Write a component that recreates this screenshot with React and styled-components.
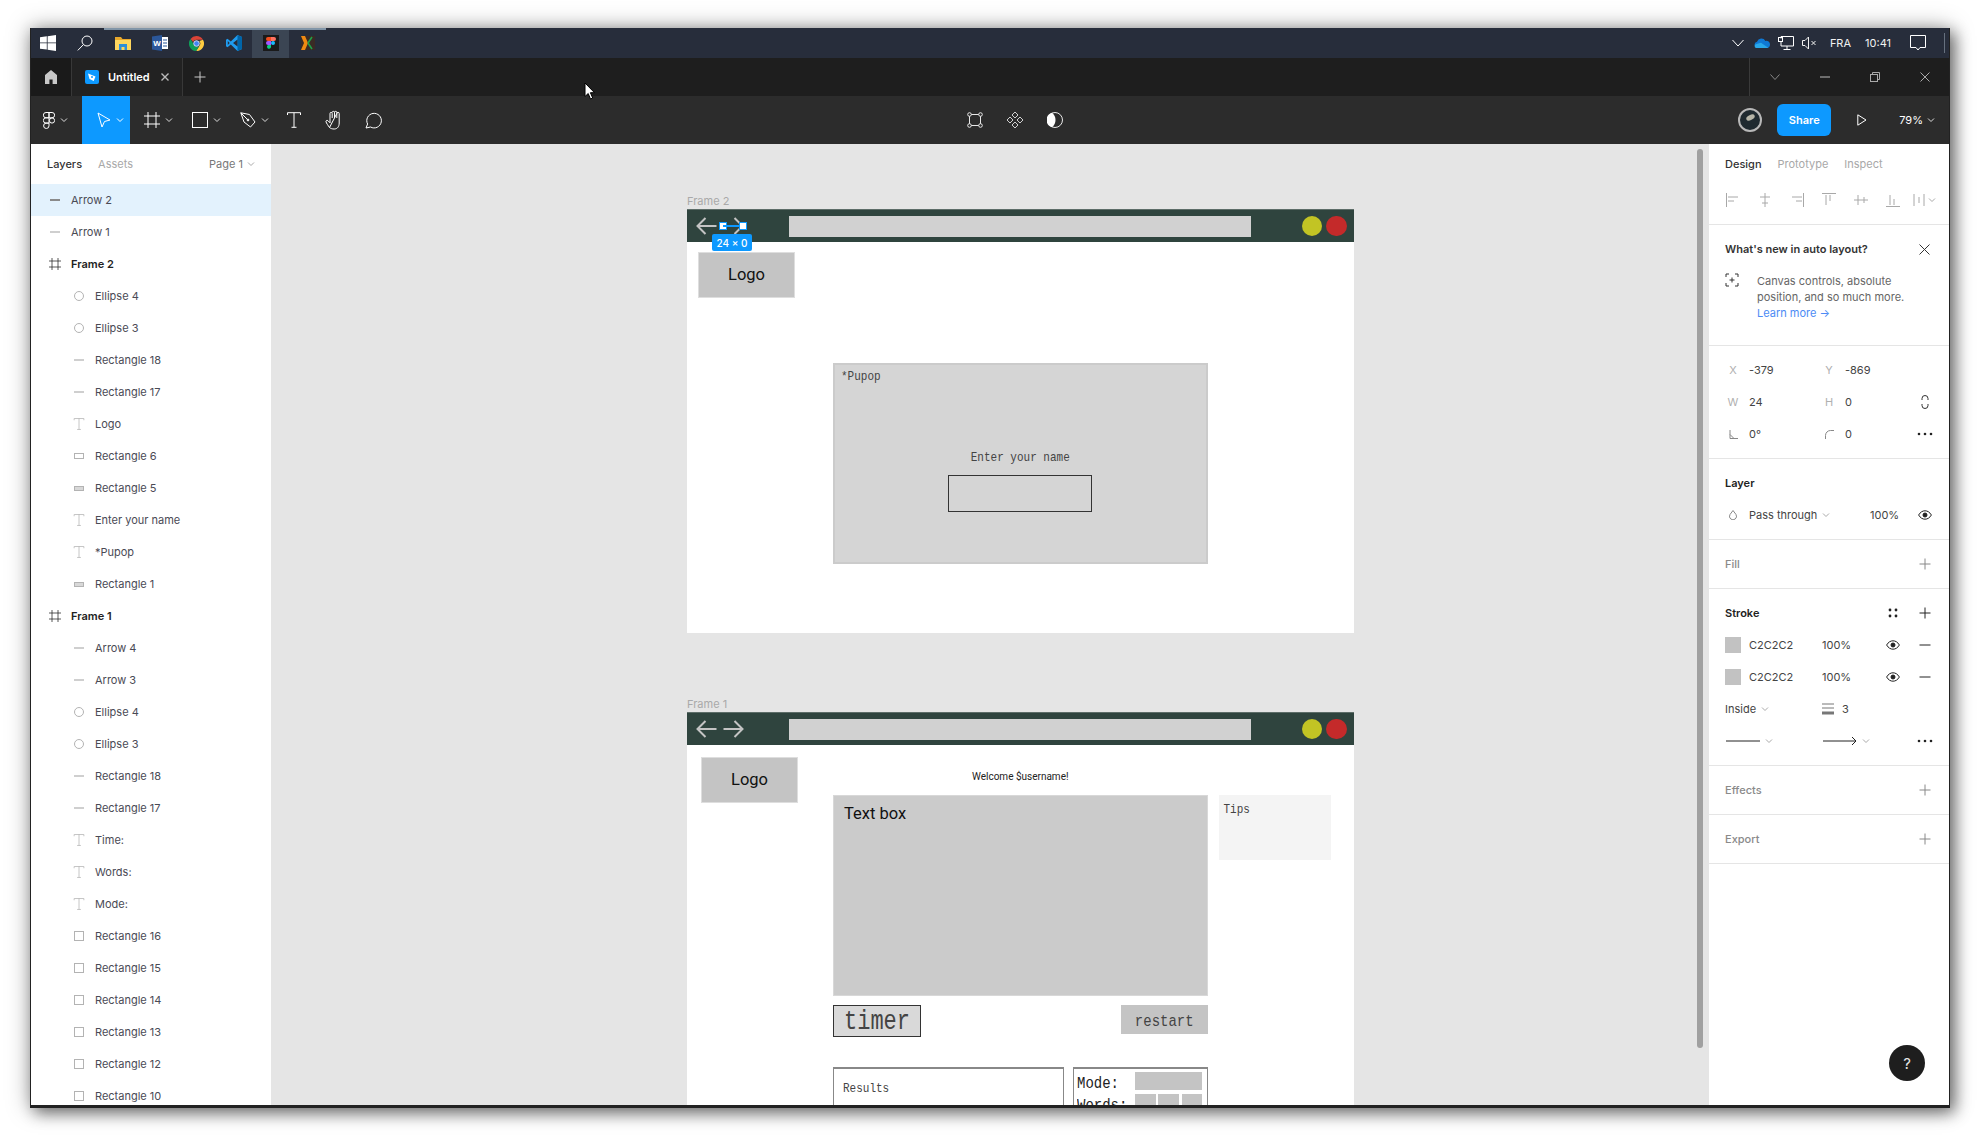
import React from 'react';
import styled, { createGlobalStyle } from 'styled-components';

const GlobalStyle = createGlobalStyle`
    html, body {
        margin: 0;
        padding: 0;
        background: #fff;
        overflow: hidden;
    }
    * {
        box-sizing: border-box;
    }
`;

const UI_FONT = `Inter, "Liberation Sans", sans-serif`;
const MONO_FONT = `"Liberation Mono", monospace`;
const SKETCH_FONT = `Roboto, "Liberation Sans", sans-serif`;

const Page = styled.div`
    width: 1980px;
    height: 1140px;
    padding: 28px 30px 32px;
    font-family: ${UI_FONT};
`;

const Window = styled.div`
    position: relative;
    width: 1920px;
    height: 1080px;
    display: flex;
    flex-direction: column;
    overflow: hidden;
    background: #2c2c2c;
    border-left: 1px solid #222;
    border-right: 1px solid #222;
    border-bottom: 3px solid #222;
    box-shadow: 5px 5px 14px rgba(0, 0, 0, 0.45), 0 0 22px rgba(0, 0, 0, 0.35);
`;

/* windows taskbar */
const Taskbar = styled.div`
    height: 30px;
    flex: none;
    display: flex;
    align-items: stretch;
    margin-left: -1px;
    background: #272d3b;
    color: #fff;
`;

const TaskCell = styled.div`
    width: ${p => p.$w || 37}px;
    display: flex;
    align-items: center;
    justify-content: center;
    background: ${p => (p.$active ? '#3b4553' : 'transparent')};
    box-shadow: ${p => (p.$open ? 'inset 0 2px 0 #8296a8' : 'none')};
`;

const Tray = styled.div`
    margin-left: auto;
    display: flex;
    align-items: center;
    padding-right: 4px;
`;

const TrayItem = styled.div`
    margin-left: ${p => p.$ml || 0}px;
    display: flex;
    align-items: center;
    font-size: 11px;
    color: #f2f2f2;
`;

const TrayLine = styled.div`
    width: 1px;
    height: 20px;
    margin-left: 18px;
    background: #66707e;
`;

/* tabs */
const TabBar = styled.div`
    height: 38px;
    flex: none;
    display: flex;
    align-items: stretch;
    background: #1e1e1e;
    color: #bbb;
`;

const HomeCell = styled.div`
    width: 41px;
    display: flex;
    align-items: center;
    justify-content: center;
    background: #1a1a1a;
    border-right: 1px solid #383838;
`;

const Tab = styled.div`
    width: 111px;
    display: flex;
    align-items: center;
    padding-left: 13px;
    background: #222;
    border-right: 1px solid #383838;
`;

const TabName = styled.span`
    margin-left: 9px;
    width: 53px;
    color: #fff;
    font-size: 11px;
    font-weight: 600;
`;

const PlusCell = styled.div`
    width: 34px;
    display: flex;
    align-items: center;
    justify-content: center;
`;

const WinControls = styled.div`
    margin-left: auto;
    margin-right: -1px;
    display: flex;
    border-left: 1px solid #3a3a3a;
`;

const WinControl = styled.div`
    width: 50px;
    display: flex;
    align-items: center;
    justify-content: center;
`;

const Pointer = styled.svg`
    position: absolute;
    left: 553px;
    top: 54px;
`;

/* figma toolbar */
const Toolbar = styled.div`
    height: 48px;
    flex: none;
    display: flex;
    align-items: stretch;
    background: #2c2c2c;
    color: #fff;
`;

const ToolButton = styled.div`
    width: ${p => p.$w || 48}px;
    display: flex;
    align-items: center;
    justify-content: ${p => (p.$center ? 'center' : 'flex-start')};
    gap: 5px;
    padding-left: ${p => (p.$center ? 0 : p.$pad || 14)}px;
    background: ${p => (p.$active ? '#0d99ff' : 'transparent')};
`;

const ToolCenter = styled.div`
    display: flex;
    margin-left: 561px;
`;

const ToolRight = styled.div`
    margin-left: auto;
    display: flex;
    align-items: center;
    padding-right: 14px;
`;

const Avatar = styled.div`
    width: 24px;
    height: 24px;
    display: flex;
    align-items: center;
    justify-content: center;
    border-radius: 50%;
    border: 2px solid #b8b8b8;
    background: #1f2a30;
`;

const AvatarSpot = styled.div`
    width: 9px;
    height: 5px;
    margin-bottom: 5px;
    border-radius: 50%;
    background: #b5b5a8;
    transform: rotate(-25deg);
`;

const ShareButton = styled.div`
    width: 54px;
    height: 32px;
    margin-left: 15px;
    display: flex;
    align-items: center;
    justify-content: center;
    border-radius: 6px;
    background: #0d99ff;
    font-size: 11px;
    font-weight: 600;
`;

const PlayBox = styled.div`
    margin-left: 26px;
    display: flex;
`;

const Zoom = styled.span`
    margin-left: 32px;
    margin-right: 4px;
    font-size: 11px;
`;

/* main area */
const Main = styled.div`
    flex: 1;
    min-height: 0;
    display: flex;
`;

const LeftPanel = styled.aside`
    width: 240px;
    flex: none;
    background: #fff;
    overflow: hidden;
`;

const PanelTabs = styled.div`
    height: 41px;
    display: flex;
    align-items: center;
    gap: 16px;
    padding: 0 16px;
    border-bottom: 1px solid #e5e5e5;
    font-size: 11px;
`;

const PanelTab = styled.span`
    color: ${p => (p.$active ? '#333' : '#a8a8a8')};
    font-weight: ${p => (p.$active ? 500 : 400)};
`;

const PageSelect = styled.span`
    margin-left: auto;
    display: flex;
    align-items: center;
    gap: 4px;
    color: #777;
`;

const LayerRow = styled.div`
    height: 32px;
    display: flex;
    align-items: center;
    gap: 8px;
    padding-left: ${p => (p.$nested ? 40 : 16)}px;
    margin-top: ${p => (p.$first ? -1 : 0)}px;
    background: ${p => (p.$selected ? '#e3f2fd' : 'transparent')};
    color: ${p => (p.$bold ? '#222' : '#4a4a55')};
    font-size: 11px;
    font-weight: ${p => (p.$bold ? 600 : 400)};
`;

const LayerIconBox = styled.span`
    width: 16px;
    height: 16px;
    flex: none;
    display: flex;
    align-items: center;
    justify-content: center;
`;

const LayerDash = styled.span`
    width: 10px;
    height: 2px;
    background: ${p => (p.$selected ? '#8a8a8a' : '#cfcfcf')};
`;

const LayerBox = styled.span`
    width: ${p => p.$w}px;
    height: ${p => p.$h}px;
    border: 1px solid #b3b3b3;
    background: ${p => (p.$filled ? '#d8d8d8' : 'transparent')};
    border-radius: ${p => (p.$round ? '50%' : '0')};
`;

/* canvas */
const Canvas = styled.main`
    position: relative;
    flex: 1;
    min-width: 0;
    overflow: hidden;
    background: #e5e5e5;
`;

const Node = styled.div`
    position: absolute;
    left: 416px;
    top: ${p => p.$top}px;
    width: 667px;
`;

const NodeLabel = styled.div`
    height: 16px;
    line-height: 16px;
    font-size: 11px;
    color: #a9a9a9;
`;

const SketchFrame = styled.div`
    position: relative;
    height: ${p => p.$h}px;
    display: flex;
    flex-direction: column;
    background: #fff;
`;

const BrowserBar = styled.div`
    height: 33px;
    flex: none;
    display: flex;
    align-items: center;
    gap: 6px;
    padding-left: 9px;
    background: #2f443e;
    border-top: 1px solid #5d6d68;
`;

const UrlField = styled.div`
    width: 461.5px;
    height: 21px;
    margin-left: 39px;
    background: #d1d1d1;
`;

const Dot = styled.div`
    width: 20.5px;
    height: 20.5px;
    margin-left: ${p => p.$ml}px;
    border-radius: 50%;
    background: ${p => p.$color};
`;

const Handle = styled.span`
    position: absolute;
    top: 13px;
    left: ${p => p.$left}px;
    width: 8px;
    height: 8px;
    background: #fff;
    border: 1px solid #0d99ff;
`;

const SelectionLine = styled.span`
    position: absolute;
    top: 16px;
    left: 36px;
    width: 20px;
    height: 2px;
    background: #0d99ff;
`;

const SizeBadge = styled.span`
    position: absolute;
    top: 25px;
    left: 25px;
    width: 40px;
    height: 17px;
    display: flex;
    align-items: center;
    justify-content: center;
    border-radius: 2px;
    background: #0d99ff;
    color: #fff;
    font-size: 10px;
    font-weight: 500;
`;

const LogoBox = styled.div`
    width: 97px;
    height: 46px;
    margin: ${p => p.$margin};
    display: flex;
    align-items: center;
    justify-content: center;
    padding-bottom: 1px;
    background: #c4c4c4;
    border: 1px solid #dedede;
    color: #111;
    font-family: ${SKETCH_FONT};
    font-size: 16.5px;
`;

const Popup = styled.div`
    width: 374.5px;
    height: 201px;
    margin: 65px 0 0 146px;
    display: flex;
    flex-direction: column;
    align-items: center;
    padding: 3px 6px;
    background: #d5d5d5;
    border: 2px solid #cbcbcb;
`;

/* the sketch uses a tall narrow mono face, stretch the closest installed one */
const MonoText = styled.span`
    display: inline-block;
    font-family: ${MONO_FONT};
    font-size: ${p => p.$size || 11}px;
    line-height: ${p => p.$lh || 16}px;
    color: ${p => p.$color || '#444'};
    transform: scaleY(1.22);
`;

const PopupTitle = styled(MonoText)`
    align-self: flex-start;
`;

const PopupPrompt = styled(MonoText)`
    margin-top: 65px;
`;

const NameInput = styled.div`
    width: 144px;
    height: 37px;
    margin-top: 10px;
    border: 1px solid #333;
`;

const FrameBody = styled.div`
    display: grid;
    grid-template-columns: 132px 385.5px 112px;
    padding-left: 14px;
`;

const MainColumn = styled.div`
    width: 374.5px;
    display: flex;
    flex-direction: column;
`;

const Welcome = styled.div`
    height: 50px;
    padding-top: 24px;
    line-height: 16px;
    text-align: center;
    font-family: ${SKETCH_FONT};
    font-size: 10px;
    color: #222;
`;

const TextBox = styled.div`
    height: 201px;
    padding: 7px 10px;
    background: #cbcbcb;
    border: 1px solid #d8d8d8;
    color: #111;
    font-family: ${SKETCH_FONT};
    font-size: 16.5px;
    line-height: 22px;
`;

const ActionRow = styled.div`
    display: flex;
    justify-content: space-between;
    align-items: flex-start;
    margin-top: 9px;
`;

const Timer = styled.div`
    width: 88px;
    height: 32px;
    display: flex;
    align-items: center;
    justify-content: center;
    padding-top: 3px;
    background: #d9d9d9;
    border: 1px solid #333;
`;

const RestartButton = styled.div`
    width: 86.5px;
    height: 29px;
    display: flex;
    align-items: center;
    justify-content: center;
    padding-top: 2px;
    background: #c4c4c4;
`;

const ResultRow = styled.div`
    display: flex;
    gap: 9px;
    margin-top: 30px;
`;

const ResultsBox = styled.div`
    width: 231px;
    height: 100px;
    padding: 6px 9px;
    border: 1px solid #888;
    border-top-width: 2px;
`;

const ModeBox = styled.div`
    width: 134.5px;
    height: 100px;
    display: grid;
    grid-template-columns: 55px 21px 21px 20px;
    grid-auto-rows: 18px;
    column-gap: 2.5px;
    row-gap: 4px;
    align-items: center;
    padding: 3px 0 0 3px;
    border: 1px solid #888;
    border-top-width: 2px;
`;

const ModeLabel = styled(MonoText)`
    margin-top: 4px;
    color: #222;
`;

const ModeField = styled.div`
    grid-column: ${p => p.$span || 'auto'};
    height: 18px;
    background: #c4c4c4;
`;

const TipsBox = styled.div`
    height: 65px;
    margin-top: 50px;
    padding: 1px 5px;
    background: #f4f4f4;
`;

const Scrollbar = styled.div`
    position: absolute;
    top: 5px;
    right: 6px;
    width: 6px;
    height: 899px;
    border-radius: 3px;
    background: #a0a0a0;
`;

/* right panel */
const RightPanel = styled.aside`
    position: relative;
    width: 240px;
    flex: none;
    background: #fff;
    font-size: 11px;
    color: #444;
`;

const DesignTabs = styled.div`
    height: 40px;
    display: flex;
    align-items: center;
    gap: 16px;
    padding-left: 16px;
`;

const Section = styled.section`
    padding: 8px 0;
    border-bottom: 1px solid #e5e5e5;
`;

const AlignSection = styled.div`
    height: 41px;
    padding: 0 0 9px 16px;
    display: flex;
    align-items: center;
    gap: 16px;
    border-bottom: 1px solid #e5e5e5;
`;

const DistributeIcon = styled.span`
    display: flex;
    align-items: center;
    gap: 1px;
    margin-left: -4px;
`;

const NewsSection = styled.section`
    height: 121px;
    border-bottom: 1px solid #e5e5e5;
`;

const NewsTitle = styled.div`
    height: 48px;
    display: flex;
    align-items: center;
    justify-content: space-between;
    padding: 0 19px 0 16px;
    font-weight: 600;
    color: #333;
`;

const NewsBody = styled.div`
    display: flex;
    padding-left: 16px;
`;

const NewsIcon = styled.div`
    width: 32px;
    flex: none;
`;

const NewsText = styled.div`
    line-height: 16px;
    color: #666;
`;

const LearnMore = styled.span`
    display: block;
    color: #4c8bf5;
`;

const Row = styled.div`
    height: 32px;
    display: grid;
    grid-template-columns: ${p => p.$columns || '16px 1fr 32px'};
    align-items: center;
    padding: 0 8px 0 16px;
    color: ${p => p.$color || '#444'};
`;

const PropRow = styled(Row)`
    grid-template-columns: 16px 8px 72px 16px 8px 1fr 32px;
`;

const PropLabel = styled.span`
    color: #b0b0b0;
    text-align: center;
`;

const IconCell = styled.span`
    display: flex;
    align-items: center;
    justify-content: center;
    color: ${p => p.$color || '#333'};
`;

const SectionTitle = styled.span`
    color: ${p => (p.$muted ? '#8a8a8a' : '#222')};
    font-weight: ${p => (p.$muted ? 500 : 600)};
`;

const Swatch = styled.span`
    width: 16px;
    height: 16px;
    background: #c2c2c2;
`;

const Muted = styled.span`
    display: flex;
    align-items: center;
    gap: 5px;
`;

const HelpButton = styled.div`
    position: absolute;
    right: 24px;
    bottom: 24px;
    width: 36px;
    height: 36px;
    display: flex;
    align-items: center;
    justify-content: center;
    border-radius: 50%;
    background: #1e1e1e;
    color: #e6e6e6;
    font-size: 15px;
`;

/* icons */
const Icon = ({ size = 16, w, h, view, children, color = 'currentColor', sw = 1 }) => (
    <svg
        width={w || size}
        height={h || size}
        viewBox={view || `0 0 ${w || size} ${h || size}`}
        fill="none"
        stroke={color}
        strokeWidth={sw}
        style={{ display: 'block', flex: 'none' }}
    >
        {children}
    </svg>
);

const Chevron = ({ color = 'currentColor' }) => (
    <Icon w={8} h={6} color={color}>
        <path d="M1 1.5 L4 4.5 L7 1.5" />
    </Icon>
);

const Plus = ({ color }) => (
    <Icon size={12} color={color}>
        <path d="M6 .5v11M.5 6h11" />
    </Icon>
);

const Minus = () => (
    <Icon size={12} color="#222">
        <path d="M.5 6h11" />
    </Icon>
);

const Dots = () => (
    <svg width="16" height="4" viewBox="0 0 16 4" style={{ display: 'block' }}>
        <circle cx="2" cy="2" r="1.3" fill="#222" />
        <circle cx="8" cy="2" r="1.3" fill="#222" />
        <circle cx="14" cy="2" r="1.3" fill="#222" />
    </svg>
);

const Eye = () => (
    <Icon w={14} h={10} color="#222">
        <path d="M.6 5C2.4 2 4.6.8 7 .8S11.6 2 13.4 5C11.6 8 9.4 9.2 7 9.2S2.4 8 .6 5z" />
        <circle cx="7" cy="5" r="2" fill="#222" />
    </Icon>
);

const Cross = ({ size = 10, color = 'currentColor', sw = 1 }) => (
    <Icon size={size} color={color} sw={sw}>
        <path d={`M.5 .5L${size - 0.5} ${size - 0.5}M${size - 0.5} .5L.5 ${size - 0.5}`} />
    </Icon>
);

const ArrowSvg = styled.svg`
    display: block;
    flex: none;
    transform: ${p => (p.$flip ? 'scaleX(-1)' : 'none')};
`;

const SketchArrow = ({ flip }) => (
    <ArrowSvg $flip={flip} width="21" height="20" viewBox="0 0 21 20" fill="none" stroke="#c4c4c4" strokeWidth="2">
        <path d="M20.5 10H2M9.5 2L1.5 10l8 8" />
    </ArrowSvg>
);

const Windows = () => (
    <svg width="16" height="16" viewBox="0 0 16 16" style={{ display: 'block' }}>
        <path fill="#fff" d="M0 2.3 6.8 1.3v6.2H0zM7.6 1.2 16 0v7.5H7.6zM0 8.3h6.8v6.3L0 13.7zM7.6 8.3H16V16l-8.4-1.2z" />
    </svg>
);

const Search = () => (
    <Icon size={16} color="#fff">
        <circle cx="10" cy="6" r="5" />
        <path d="M6.4 9.6 .8 15.4" />
    </Icon>
);

const Explorer = () => (
    <svg width="16" height="14" viewBox="0 0 16 14" style={{ display: 'block' }}>
        <path fill="#e8a82c" d="M0 1h6l1.5 2H16v2H0z" />
        <path fill="#ffd75e" d="M0 4h16v10H0z" />
        <path fill="#2f8fd8" d="M4 8h8v6H9.5v-3h-3v3H4z" />
    </svg>
);

const Word = () => (
    <svg width="16" height="16" viewBox="0 0 16 16" style={{ display: 'block' }}>
        <rect x="6" y="2" width="10" height="12" fill="#fff" />
        <path d="M11 5h4M11 8h4M11 11h4" stroke="#2b579a" strokeWidth="1" />
        <path fill="#2b579a" d="M0 1.5 10 0v16L0 14.5z" />
        <text x="5" y="11" fill="#fff" fontSize="8" fontWeight="700" textAnchor="middle" fontFamily="Liberation Sans">W</text>
    </svg>
);

const Chrome = () => (
    <svg width="15" height="15" viewBox="0 0 16 16" style={{ display: 'block' }}>
        <path fill="#db4437" d="M8 0a8 8 0 0 1 6.9 4H8a4 4 0 0 0-3.7 2.5L1.6 3.1A8 8 0 0 1 8 0z" />
        <path fill="#ffcd40" d="M14.9 4A8 8 0 0 1 7.6 16l3.2-5.2A4 4 0 0 0 11 5.4L14.9 4z" />
        <path fill="#0f9d58" d="M1.6 3.1l3 5.2a4 4 0 0 0 6.2 2.5L7.6 16A8 8 0 0 1 1.6 3.1z" />
        <circle cx="8" cy="8" r="3" fill="#4285f4" stroke="#fff" strokeWidth=".8" />
    </svg>
);

const VsCode = () => (
    <svg width="16" height="16" viewBox="0 0 16 16" style={{ display: 'block' }}>
        <path fill="#1f9cf0" d="M11.5 0 16 2v12l-4.5 2L4.8 9.6 1.5 12.2 0 11.3V4.7l1.5-.9 3.3 2.6z" />
        <path fill="#0065a9" d="M11.5 0 16 2v12l-4.5 2z" />
        <path fill="#272d3b" d="M11.5 4.6v6.8L7 8zM1.8 6.1 3.7 8l-1.9 1.9z" />
    </svg>
);

const FigmaApp = () => (
    <svg width="16" height="16" viewBox="0 0 16 16" style={{ display: 'block' }}>
        <rect width="16" height="16" fill="#1a1a1a" />
        <path fill="#f24e1e" d="M5 2h3v4H5a2 2 0 0 1 0-4z" />
        <path fill="#ff7262" d="M8 2h3a2 2 0 0 1 0 4H8z" />
        <path fill="#a259ff" d="M5 6h3v4H5a2 2 0 0 1 0-4z" />
        <circle cx="10" cy="8" r="2" fill="#1abcfe" />
        <path fill="#0acf83" d="M5 10h3v2a2 2 0 1 1-3-2z" />
    </svg>
);

const XApp = () => (
    <svg width="14" height="14" viewBox="0 0 14 14" style={{ display: 'block' }}>
        <rect width="14" height="14" fill="#3a2b25" />
        <path fill="#f08a12" d="M0 0h4l3 7-3 7H0l3-7z" />
        <path stroke="#1fa04a" strokeWidth="1.6" fill="none" d="M7 7l4-6M7 7l4 6" />
    </svg>
);

const OneDrive = () => (
    <svg width="16" height="10" viewBox="0 0 16 10" style={{ display: 'block' }}>
        <path fill="#0f78d4" d="M3.4 10A3.2 3.2 0 0 1 3 3.7 4.6 4.6 0 0 1 11.4 3 3.6 3.6 0 0 1 16 6.6 3.4 3.4 0 0 1 12.6 10z" />
        <path fill="#29a8ea" d="M2 10a2 2 0 0 1 .6-3.9L7 4.8l7.6 5.2z" />
    </svg>
);

const Network = () => (
    <Icon size={16} color="#fff">
        <path d="M3 3.5V1.5h12.5v9.5H3V6.5M9 11v3M5.5 14.5h7" />
        <rect x=".5" y="2.5" width="4" height="4" />
    </Icon>
);

const Speaker = () => (
    <Icon w={15} h={14} color="#f2f2f2">
        <path d="M.5 4.5h2.5L6.5 1v12L3 9.5H.5zM9.5 5l4 4M13.5 5l-4 4" />
    </Icon>
);

const Notice = () => (
    <Icon size={16} color="#fff">
        <path d="M.5 .5h15v12H10l-2 2.5-2-2.5H.5z" />
    </Icon>
);

const Home = () => (
    <svg width="14" height="14" viewBox="0 0 14 14" style={{ display: 'block' }}>
        <path fill="#c8c8c8" d="M7 0 13 5v9H8.6V9.5H5.4V14H1V5z" />
    </svg>
);

const FileBadge = () => (
    <svg width="14" height="14" viewBox="0 0 14 14" style={{ display: 'block' }}>
        <rect width="14" height="14" rx="2" fill="#0d99ff" />
        <path d="M3 3.5 10.5 6.5 8.7 11 4.5 9z" fill="#fff" />
        <circle cx="7" cy="7" r="1" fill="#0d99ff" />
    </svg>
);

const FigmaMenu = () => (
    <Icon w={12} h={17} color="#fff">
        <path d="M3 .5h3v5.3H3A2.6 2.6 0 0 1 3 .5zM6 .5h3a2.6 2.6 0 0 1 0 5.3H6zM3 5.8h3v5.3H3a2.6 2.6 0 0 1 0-5.3z" />
        <circle cx="9" cy="8.5" r="2.6" />
        <path d="M3 11.1h3v2.7a2.7 2.7 0 1 1-3-2.7z" />
    </Icon>
);

const Move = () => (
    <Icon w={14} h={16} color="#fff">
        <path d="M1 1 13 8 7.5 9.5 5 15z" />
    </Icon>
);

const FrameTool = ({ size = 16, color = '#fff' }) => (
    <Icon color={color} w={size} h={size} view="0 0 16 16">
        <path d="M4 0v16M12 0v16M0 4h16M0 12h16" />
    </Icon>
);

const RectTool = () => (
    <Icon size={16} color="#fff">
        <rect x=".5" y=".5" width="15" height="15" />
    </Icon>
);

const PenTool = () => (
    <Icon size={16} color="#fff">
        <path d="M.8 .8 9.5 2.5 15 10l-4.5 5-6.5-5z" />
        <path d="M.8 .8 7.5 7.5" />
        <circle cx="8" cy="8" r=".9" fill="#fff" />
    </Icon>
);

const TextTool = ({ w = 14, h = 16, color = '#fff' }) => (
    <Icon w={w} h={h} view="0 0 14 16" color={color}>
        <path d="M.5 3V.7h13V3M7 .7v14.6M4.5 15.3h5" />
    </Icon>
);

const HandTool = () => (
    <Icon w={18} h={20} color="#fff">
        <path d="M4.5 17.5C3 15.5 1.5 13.2 1 11.8c-.4-1.2 1-2 2-1l2 2V3.5a1 1 0 0 1 2.2 0V8M7.2 2.5a1.1 1.1 0 0 1 2.3 0V8M9.5 2.5a1.1 1.1 0 0 1 2.3 0V8M11.8 3.5a1.1 1.1 0 0 1 2.4 0v9.5c0 3.5-1.8 6-5 6-2 0-3.6-.5-4.7-1.5z" />
    </Icon>
);

const Comment = () => (
    <Icon w={18} h={17} color="#fff">
        <path d="M1 16 2.6 12A7.3 7.3 0 1 1 5.5 15z" />
    </Icon>
);

const CornerHandles = () => (
    <Icon size={16} color="#e8e8e8">
        <path d="M3 2.5h10M3 13.5h10M2.5 3v10M13.5 3v10" />
        <circle cx="2.5" cy="2.5" r="1.8" fill="#2c2c2c" />
        <circle cx="13.5" cy="2.5" r="1.8" fill="#2c2c2c" />
        <circle cx="2.5" cy="13.5" r="1.8" fill="#2c2c2c" />
        <circle cx="13.5" cy="13.5" r="1.8" fill="#2c2c2c" />
    </Icon>
);

const ComponentDiamonds = () => (
    <Icon size={18} color="#cfcfcf">
        <path d="M9 1l3 3-3 3-3-3zM4 6l3 3-3 3-3-3zM14 6l3 3-3 3-3-3zM9 11l3 3-3 3-3-3z" />
    </Icon>
);

const Contrast = () => (
    <svg width="16" height="16" viewBox="0 0 16 16" style={{ display: 'block' }}>
        <circle cx="8" cy="8" r="7.5" fill="none" stroke="#e8e8e8" />
        <path d="M5 .8a7.5 7.5 0 0 0 0 14.4A9 9 0 0 0 8.5 8 9 9 0 0 0 5 .8z" fill="#fff" />
    </svg>
);

const Play = () => (
    <Icon w={10} h={12} color="#fff" view="0 0 10 12">
        <path d="M.8 .8 9 6 .8 11.2z" />
    </Icon>
);

const Restore = () => (
    <Icon size={10} color="#aaa">
        <rect x=".5" y="2.5" width="7" height="7" />
        <path d="M2.5 2.5v-2h7v7h-2" />
    </Icon>
);

const AlignIcon = ({ bars }) => (
    <Icon size={16} color="#a8a8a8">
        <path d={bars} />
    </Icon>
);

const ALIGN_ICONS = [
    'M1.5 1v14M3 5h10M3 9h6',
    'M8 1v14M3 5h10M5 11h6',
    'M14.5 1v14M3 5h10M7 9h6',
    'M1 1.5h14M5 3v10M9 3v6',
    'M1 8h14M5 3v10M11 5v6',
    'M1 14.5h14M5 3v10M9 7v6',
];

const LayerIcon = ({ kind, selected }) => (
    <LayerIconBox>
        {kind === 'line' && <LayerDash $selected={selected} />}
        {kind === 'ellipse' && <LayerBox $w={10} $h={10} $round />}
        {kind === 'text' && <TextTool w={12} h={12} color="#b3b3b3" />}
        {kind === 'frame' && <FrameTool size={12} color="#222" />}
        {kind === 'flat' && <LayerBox $w={10} $h={6} />}
        {kind === 'flatFill' && <LayerBox $w={10} $h={5} $filled />}
        {kind === 'square' && <LayerBox $w={10} $h={10} />}
    </LayerIconBox>
);

const LAYERS = [
    { name: 'Arrow 2', kind: 'line', selected: true },
    { name: 'Arrow 1', kind: 'line' },
    { name: 'Frame 2', kind: 'frame', bold: true },
    { name: 'Ellipse 4', kind: 'ellipse', nested: true },
    { name: 'Ellipse 3', kind: 'ellipse', nested: true },
    { name: 'Rectangle 18', kind: 'line', nested: true },
    { name: 'Rectangle 17', kind: 'line', nested: true },
    { name: 'Logo', kind: 'text', nested: true },
    { name: 'Rectangle 6', kind: 'flat', nested: true },
    { name: 'Rectangle 5', kind: 'flatFill', nested: true },
    { name: 'Enter your name', kind: 'text', nested: true },
    { name: '*Pupop', kind: 'text', nested: true },
    { name: 'Rectangle 1', kind: 'flatFill', nested: true },
    { name: 'Frame 1', kind: 'frame', bold: true },
    { name: 'Arrow 4', kind: 'line', nested: true },
    { name: 'Arrow 3', kind: 'line', nested: true },
    { name: 'Ellipse 4', kind: 'ellipse', nested: true },
    { name: 'Ellipse 3', kind: 'ellipse', nested: true },
    { name: 'Rectangle 18', kind: 'line', nested: true },
    { name: 'Rectangle 17', kind: 'line', nested: true },
    { name: 'Time:', kind: 'text', nested: true },
    { name: 'Words:', kind: 'text', nested: true },
    { name: 'Mode:', kind: 'text', nested: true },
    { name: 'Rectangle 16', kind: 'square', nested: true },
    { name: 'Rectangle 15', kind: 'square', nested: true },
    { name: 'Rectangle 14', kind: 'square', nested: true },
    { name: 'Rectangle 13', kind: 'square', nested: true },
    { name: 'Rectangle 12', kind: 'square', nested: true },
    { name: 'Rectangle 10', kind: 'square', nested: true },
];

const TopBar = ({ children }) => (
    <BrowserBar>
        <SketchArrow />
        <SketchArrow flip />
        <UrlField />
        <Dot $ml={45} $color="#c2c424" />
        <Dot $ml={-2} $color="#c42a2a" />
        {children}
    </BrowserBar>
);

const StrokeRow = () => (
    <Row $columns="16px 8px 73px 1fr 16px 8px 32px">
        <Swatch />
        <span />
        <span>C2C2C2</span>
        <span>100%</span>
        <IconCell>
            <Eye />
        </IconCell>
        <span />
        <IconCell>
            <Minus />
        </IconCell>
    </Row>
);

const App = () => (
    <Page>
        <GlobalStyle />
        <Window>
            <Taskbar>
                <TaskCell $w={36}>
                    <Windows />
                </TaskCell>
                <TaskCell $w={38}>
                    <Search />
                </TaskCell>
                <TaskCell $open>
                    <Explorer />
                </TaskCell>
                <TaskCell $open>
                    <Word />
                </TaskCell>
                <TaskCell $open>
                    <Chrome />
                </TaskCell>
                <TaskCell $open>
                    <VsCode />
                </TaskCell>
                <TaskCell $open $active>
                    <FigmaApp />
                </TaskCell>
                <TaskCell $open>
                    <XApp />
                </TaskCell>
                <Tray>
                    <TrayItem>
                        <Icon w={12} h={8} color="#fff">
                            <path d="M.5 1 6 7l5.5-6" />
                        </Icon>
                    </TrayItem>
                    <TrayItem $ml={10}>
                        <OneDrive />
                    </TrayItem>
                    <TrayItem $ml={8}>
                        <Network />
                    </TrayItem>
                    <TrayItem $ml={8}>
                        <Speaker />
                    </TrayItem>
                    <TrayItem $ml={13}>FRA</TrayItem>
                    <TrayItem $ml={14}>10:41</TrayItem>
                    <TrayItem $ml={19}>
                        <Notice />
                    </TrayItem>
                    <TrayLine />
                </Tray>
            </Taskbar>

            <TabBar>
                <HomeCell>
                    <Home />
                </HomeCell>
                <Tab>
                    <FileBadge />
                    <TabName>Untitled</TabName>
                    <Cross size={8} color="#bbb" sw={1.4} />
                </Tab>
                <PlusCell>
                    <Plus color="#c8c8c8" />
                </PlusCell>
                <WinControls>
                    <WinControl>
                        <Icon w={10} h={6} color="#888">
                            <path d="M.5 .5 5 5.5l4.5-5" />
                        </Icon>
                    </WinControl>
                    <WinControl>
                        <Icon w={10} h={2} color="#bbb">
                            <path d="M0 1h10" />
                        </Icon>
                    </WinControl>
                    <WinControl>
                        <Restore />
                    </WinControl>
                    <WinControl>
                        <Cross color="#aaa" />
                    </WinControl>
                </WinControls>
            </TabBar>

            <Pointer width="12" height="18" viewBox="0 0 12 18">
                <path d="M1 1v13.5l3.2-3 2.3 5.5 2.2-1-2.3-5.3H10.5z" fill="#fff" stroke="#000" strokeWidth="1" />
            </Pointer>

            <Toolbar>
                <ToolButton $w={51} $pad={12}>
                    <FigmaMenu />
                    <Chevron color="#ddd" />
                </ToolButton>
                <ToolButton $active $pad={15}>
                    <Move />
                    <Chevron color="#fff" />
                </ToolButton>
                <ToolButton>
                    <FrameTool />
                    <Chevron color="#ddd" />
                </ToolButton>
                <ToolButton>
                    <RectTool />
                    <Chevron color="#ddd" />
                </ToolButton>
                <ToolButton>
                    <PenTool />
                    <Chevron color="#ddd" />
                </ToolButton>
                <ToolButton $w={40} $center>
                    <TextTool />
                </ToolButton>
                <ToolButton $w={40} $center>
                    <HandTool />
                </ToolButton>
                <ToolButton $w={40} $center>
                    <Comment />
                </ToolButton>
                <ToolCenter>
                    <ToolButton $w={40} $center>
                        <CornerHandles />
                    </ToolButton>
                    <ToolButton $w={40} $center>
                        <ComponentDiamonds />
                    </ToolButton>
                    <ToolButton $w={40} $center>
                        <Contrast />
                    </ToolButton>
                </ToolCenter>
                <ToolRight>
                    <Avatar>
                        <AvatarSpot />
                    </Avatar>
                    <ShareButton>Share</ShareButton>
                    <PlayBox>
                        <Play />
                    </PlayBox>
                    <Zoom>79%</Zoom>
                    <Chevron color="#ddd" />
                </ToolRight>
            </Toolbar>

            <Main>
                <LeftPanel>
                    <PanelTabs>
                        <PanelTab $active>Layers</PanelTab>
                        <PanelTab>Assets</PanelTab>
                        <PageSelect>
                            Page 1 <Chevron color="#aaa" />
                        </PageSelect>
                    </PanelTabs>
                    {LAYERS.map((layer, i) => (
                        <LayerRow
                            key={i}
                            $first={i === 0}
                            $nested={layer.nested}
                            $selected={layer.selected}
                            $bold={layer.bold}
                        >
                            <LayerIcon kind={layer.kind} selected={layer.selected} />
                            {layer.name}
                        </LayerRow>
                    ))}
                </LeftPanel>

                <Canvas>
                    <Node $top={49}>
                        <NodeLabel>Frame 2</NodeLabel>
                        <SketchFrame $h={424}>
                            <TopBar>
                                <Handle $left={32} />
                                <SelectionLine />
                                <Handle $left={52} />
                                <SizeBadge>24 × 0</SizeBadge>
                            </TopBar>
                            <LogoBox $margin="10px 0 0 11px">Logo</LogoBox>
                            <Popup>
                                <PopupTitle>*Pupop</PopupTitle>
                                <PopupPrompt>Enter your name</PopupPrompt>
                                <NameInput />
                            </Popup>
                        </SketchFrame>
                    </Node>

                    <Node $top={552}>
                        <NodeLabel>Frame 1</NodeLabel>
                        <SketchFrame $h={500}>
                            <TopBar />
                            <FrameBody>
                                <LogoBox $margin="12px 0 0 0">Logo</LogoBox>
                                <MainColumn>
                                    <Welcome>Welcome $username!</Welcome>
                                    <TextBox>Text box</TextBox>
                                    <ActionRow>
                                        <Timer>
                                            <MonoText $size={22} $lh={24}>
                                                timer
                                            </MonoText>
                                        </Timer>
                                        <RestartButton>
                                            <MonoText $size={14}>restart</MonoText>
                                        </RestartButton>
                                    </ActionRow>
                                    <ResultRow>
                                        <ResultsBox>
                                            <MonoText>Results</MonoText>
                                        </ResultsBox>
                                        <ModeBox>
                                            <ModeLabel $size={14}>Mode:</ModeLabel>
                                            <ModeField $span="2 / 5" />
                                            <ModeLabel $size={14}>Words:</ModeLabel>
                                            <ModeField />
                                            <ModeField />
                                            <ModeField />
                                        </ModeBox>
                                    </ResultRow>
                                </MainColumn>
                                <TipsBox>
                                    <MonoText>Tips</MonoText>
                                </TipsBox>
                            </FrameBody>
                        </SketchFrame>
                    </Node>
                    <Scrollbar />
                </Canvas>

                <RightPanel>
                    <DesignTabs>
                        <PanelTab $active>Design</PanelTab>
                        <PanelTab>Prototype</PanelTab>
                        <PanelTab>Inspect</PanelTab>
                    </DesignTabs>
                    <AlignSection>
                        {ALIGN_ICONS.map(bars => (
                            <AlignIcon key={bars} bars={bars} />
                        ))}
                        <DistributeIcon>
                            <Icon size={14} color="#a8a8a8">
                                <path d="M1 1v12M11 1v12M6 4v6" />
                            </Icon>
                            <Chevron color="#aaa" />
                        </DistributeIcon>
                    </AlignSection>
                    <NewsSection>
                        <NewsTitle>
                            What's new in auto layout?
                            <Cross size={11} color="#333" />
                        </NewsTitle>
                        <NewsBody>
                            <NewsIcon>
                                <Icon size={14} color="#333">
                                    <path d="M1 4V1h3M10 1h3v3M13 10v3h-3M4 13H1v-3M7 4.5v5M4.5 7h5" />
                                </Icon>
                            </NewsIcon>
                            <NewsText>
                                Canvas controls, absolute
                                <br />
                                position, and so much more.
                                <LearnMore>Learn more →</LearnMore>
                            </NewsText>
                        </NewsBody>
                    </NewsSection>
                    <Section>
                        <PropRow>
                            <PropLabel>X</PropLabel>
                            <span />
                            <span>-379</span>
                            <PropLabel>Y</PropLabel>
                            <span />
                            <span>-869</span>
                            <span />
                        </PropRow>
                        <PropRow>
                            <PropLabel>W</PropLabel>
                            <span />
                            <span>24</span>
                            <PropLabel>H</PropLabel>
                            <span />
                            <span>0</span>
                            <IconCell>
                                <Icon w={8} h={14} color="#333">
                                    <path d="M1 5V3.5a3 3 0 0 1 6 0V5M1 9v1.5a3 3 0 0 0 6 0V9" />
                                </Icon>
                            </IconCell>
                        </PropRow>
                        <PropRow>
                            <IconCell $color="#999">
                                <Icon size={9} color="#888">
                                    <path d="M1 0v8.5h8M1 4.5l4 4" />
                                </Icon>
                            </IconCell>
                            <span />
                            <span>0°</span>
                            <IconCell>
                                <Icon size={9} color="#888">
                                    <path d="M.5 9V5.5a5 5 0 0 1 5-5H9" />
                                </Icon>
                            </IconCell>
                            <span />
                            <span>0</span>
                            <IconCell>
                                <Dots />
                            </IconCell>
                        </PropRow>
                    </Section>
                    <Section>
                        <Row>
                            <SectionTitle>Layer</SectionTitle>
                        </Row>
                        <Row $columns="16px 8px 1fr 39px 32px">
                            <IconCell>
                                <Icon w={8} h={10} color="#888">
                                    <path d="M4 .5 7 4.5a3.5 3.5 0 1 1-6 0z" />
                                </Icon>
                            </IconCell>
                            <span />
                            <Muted>
                                Pass through <Chevron color="#aaa" />
                            </Muted>
                            <span>100%</span>
                            <IconCell>
                                <Eye />
                            </IconCell>
                        </Row>
                    </Section>
                    <Section>
                        <Row $columns="1fr 32px">
                            <SectionTitle $muted>Fill</SectionTitle>
                            <IconCell>
                                <Plus color="#888" />
                            </IconCell>
                        </Row>
                    </Section>
                    <Section>
                        <Row $columns="1fr 16px 8px 32px">
                            <SectionTitle>Stroke</SectionTitle>
                            <IconCell>
                                <svg width="10" height="10" viewBox="0 0 10 10" style={{ display: 'block' }}>
                                    <circle cx="2" cy="2" r="1.4" fill="#222" />
                                    <circle cx="8" cy="2" r="1.4" fill="#222" />
                                    <circle cx="2" cy="8" r="1.4" fill="#222" />
                                    <circle cx="8" cy="8" r="1.4" fill="#222" />
                                </svg>
                            </IconCell>
                            <span />
                            <IconCell>
                                <Plus color="#222" />
                            </IconCell>
                        </Row>
                        <StrokeRow />
                        <StrokeRow />
                        <Row $columns="97px 12px 8px 1fr">
                            <Muted>
                                Inside <Chevron color="#aaa" />
                            </Muted>
                            <Icon w={12} h={12} color="#777">
                                <path d="M0 1h12M0 5h12" />
                                <path d="M0 10h12" strokeWidth="3" />
                            </Icon>
                            <span />
                            <span>3</span>
                        </Row>
                        <Row $columns="97px 1fr 32px">
                            <Muted>
                                <Icon w={35} h={6} color="#222">
                                    <path d="M1 3h34" />
                                </Icon>
                                <Chevron color="#aaa" />
                            </Muted>
                            <Muted>
                                <Icon w={35} h={10} color="#222">
                                    <path d="M1 5h33M30 1l4 4-4 4" />
                                </Icon>
                                <Chevron color="#aaa" />
                            </Muted>
                            <IconCell>
                                <Dots />
                            </IconCell>
                        </Row>
                    </Section>
                    <Section>
                        <Row $columns="1fr 32px">
                            <SectionTitle $muted>Effects</SectionTitle>
                            <IconCell>
                                <Plus color="#888" />
                            </IconCell>
                        </Row>
                    </Section>
                    <Section>
                        <Row $columns="1fr 32px">
                            <SectionTitle $muted>Export</SectionTitle>
                            <IconCell>
                                <Plus color="#888" />
                            </IconCell>
                        </Row>
                    </Section>
                    <HelpButton>?</HelpButton>
                </RightPanel>
            </Main>
        </Window>
    </Page>
);

export default App;
